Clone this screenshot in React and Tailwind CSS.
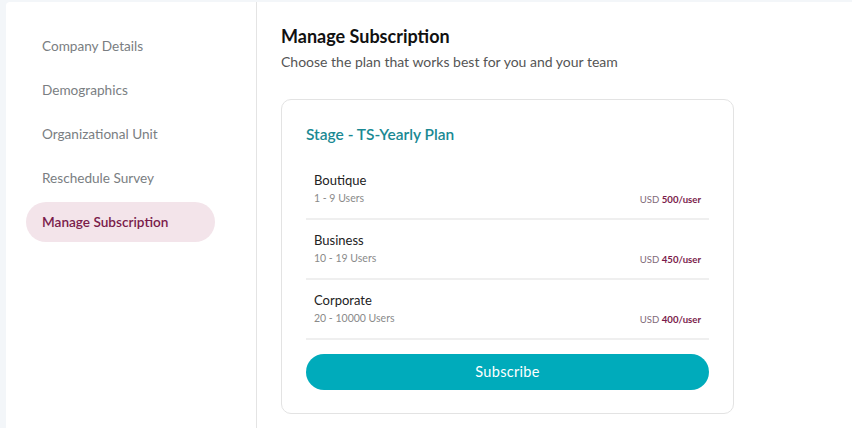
import React from "react";

const nav = ["Company Details", "Demographics", "Organizational Unit", "Reschedule Survey", "Manage Subscription"];
const plans = [
  { name: "Boutique", users: "1 - 9 Users", price: "500" },
  { name: "Business", users: "10 - 19 Users", price: "450" },
  { name: "Corporate", users: "20 - 10000 Users", price: "400" },
];

export default function App() {
  return (
    <div className="w-[852px] h-[428px] bg-[#f3f6f9] pt-[2px] pl-[6px] overflow-hidden" style={{ fontFamily: "Lato, 'Noto Sans', sans-serif" }}>
      <div className="flex h-full bg-white rounded-tl-[4px]">
        <aside className="w-[251px] shrink-0 border-r border-[#e4e4e4] pt-[24px] pl-[20px]">
          <ul className="flex flex-col gap-[4px]">
            {nav.map((n, i) => {
              const active = i === nav.length - 1;
              return (
                <li key={n} className={`w-[189px] h-[40px] flex items-center pl-[16px] rounded-full text-[13.6px] ${active ? "bg-[#f3e4ea] text-[#7a1b4b] font-semibold" : "text-[#7a7e82]"}`}>
                  {n}
                </li>
              );
            })}
          </ul>
        </aside>
        <main className="flex-1 pl-[24px] pt-[22px]">
          <h1 className="text-[18px] leading-[24px] font-bold text-[#111]">Manage Subscription</h1>
          <p className="mt-[4px] text-[14px] leading-[20px] text-[#555]">Choose the plan that works best for you and your team</p>
          <div className="mt-[27px] w-[453px] h-[315px] border border-[#e3e3e3] rounded-[10px] px-[24px] pt-[23px]">
            <h2 className="text-[15.5px] leading-[22px] font-semibold text-[#1a8993]">Stage - TS-Yearly Plan</h2>
            <div className="mt-[15px]">
              {plans.map((p) => (
                <div key={p.name} className="h-[60px] border-b-2 border-[#efefef] px-[8px] pt-[11px] flex justify-between">
                  <div>
                    <div className="text-[13px] leading-[18px] text-[#222]">{p.name}</div>
                    <div className="text-[10.5px] leading-[14px] text-[#8a8a8a] mt-[2px]">{p.users}</div>
                  </div>
                  <div className="self-start mt-[22px] text-[9.6px] leading-[14px] text-[#7f6a78]">
                    USD <span className="font-bold text-[#7a1b4b]">{p.price}/user</span>
                  </div>
                </div>
              ))}
            </div>
            <button className="mt-[14px] w-full h-[36px] rounded-full bg-[#00abbb] text-white text-[14.5px] leading-[34px] tracking-[0.3px]">Subscribe</button>
          </div>
        </main>
      </div>
    </div>
  );
}
